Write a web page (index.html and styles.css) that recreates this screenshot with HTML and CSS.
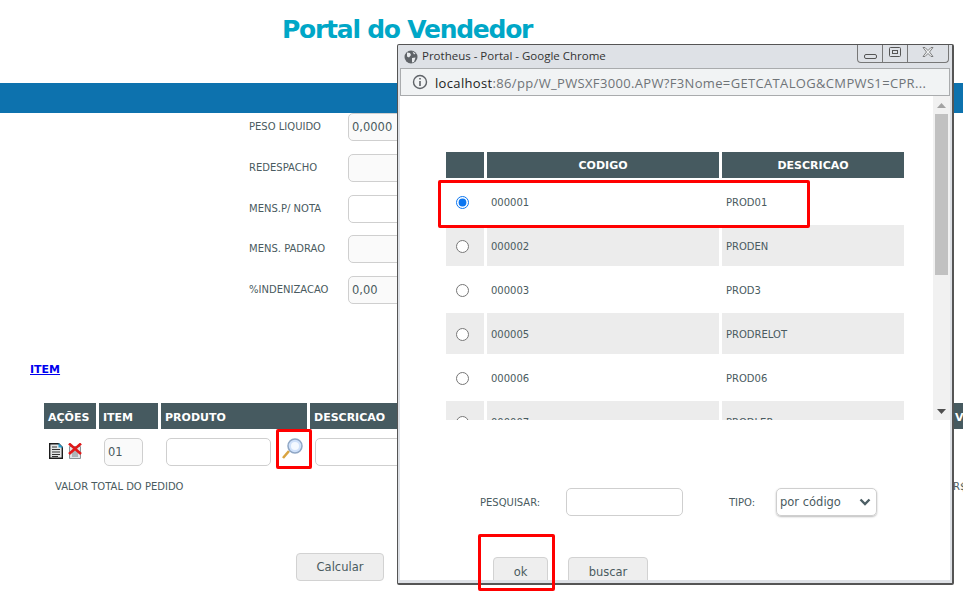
FILE: index.html
```html
<!DOCTYPE html>
<html lang="pt">
<head>
<meta charset="utf-8">
<title>Portal do Vendedor</title>
<link rel="stylesheet" href="styles.css">
</head>
<body>
<div class="page">
  <header class="head"><h1 class="title">Portal do Vendedor</h1></header>
  <div class="bar"></div>
  <form class="form">
    <div class="frow"><label class="lbl">PESO LIQUIDO</label><input class="inp ro wide" value="0,0000"></div>
    <div class="frow"><label class="lbl">REDESPACHO</label><input class="inp ro wide"></div>
    <div class="frow"><label class="lbl">MENS.P/ NOTA</label><input class="inp wide"></div>
    <div class="frow"><label class="lbl">MENS. PADRAO</label><input class="inp ro wide"></div>
    <div class="frow"><label class="lbl">%INDENIZACAO</label><input class="inp ro wide" value="0,00"></div>
  </form>
  <a class="itemlink" href="#">ITEM</a>
  <table class="grid">
    <colgroup><col class="c1"><col class="c2"><col class="c3"><col class="c4"><col class="c5"></colgroup>
    <thead><tr><th>AÇÕES</th><th>ITEM</th><th>PRODUTO</th><th>DESCRICAO</th><th class="vl">VL</th></tr></thead>
    <tbody><tr>
      <td class="acts">
        <svg class="ic" width="14" height="16" viewBox="0 0 14 16"><path d="M.7.7h9l3.600 3.600v11H.7z" fill="#e4e6e6" stroke="#1c1c1c" stroke-width="1.400"/><path d="M9.500 0L14 4.500H9.500z" fill="#2a9fd0"/><path d="M3 4h5M3 6.500h8M3 9h8M3 11.500h8M3 13.500h6" stroke="#333"/></svg>
        <svg class="ic" width="14" height="16" viewBox="0 0 14 16"><path d="M1.500 3.500h11v12h-11z" fill="#dfe3e6" stroke="#8a9296"/><path d="M4 9h6M4 11h6M4 13h6" stroke="#7d8588"/><path d="M1 .5l12 10.500M13 .5L1 11" stroke="#e01818" stroke-width="2.600"/></svg>
      </td>
      <td class="cell-it"><input class="inp ro itemno" value="01"></td>
      <td class="cell-pr"><input class="inp prod"><svg class="lens" width="22" height="24" viewBox="0 0 22 24"><path d="M2 20l6-7" stroke="#d9a441" stroke-width="2.600"/><circle cx="14" cy="8" r="7" fill="#cfe1fa" stroke="#8fa6c4" stroke-width="1.500"/><circle cx="14" cy="8" r="4" fill="#f4f9ff"/></svg></td>
      <td class="cell-de"><input class="inp desc"></td>
      <td></td>
    </tr></tbody>
  </table>
  <div class="total"><span>VALOR TOTAL DO PEDIDO</span><span class="rs">R$</span></div>
  <div class="calcrow"><button class="btn calc" type="button">Calcular</button></div>

  <section class="win">
    <div class="titlebar">
      <svg class="globe" width="14" height="14" viewBox="0 0 14 14"><circle cx="7" cy="7" r="6.500" fill="#5f6368"/><path d="M3 2.500l3 .5 1 2-2 2.500-2-1zM8 8l3.500-.5L10 12l-2 .5zM8.500 1.500l3 2-1.500 1z" fill="#e8eaed"/></svg>
      <span class="wtitle">Protheus - Portal - Google Chrome</span>
      <div class="ctrls">
        <span class="ctl c-min"><svg width="13" height="5" viewBox="0 0 13 5"><rect x=".5" y=".5" width="12" height="4" rx="1.500" fill="none" stroke="#555"/></svg></span>
        <span class="ctl c-max"><svg width="12" height="10" viewBox="0 0 12 10"><rect x=".5" y=".5" width="11" height="9" rx="1" fill="none" stroke="#555"/><rect x="3.500" y="3.500" width="5" height="3" fill="none" stroke="#555"/></svg></span>
        <span class="ctl c-x"><svg width="12" height="10" viewBox="0 0 12 10"><path d="M1 .5h2l3 3 3-3h2L7.500 5 11 9.500H9L6 6.500l-3 3H1L4.500 5z" fill="#eef0f2" stroke="#666" stroke-width=".8"/></svg></span>
      </div>
    </div>
    <div class="urlbar">
      <svg class="info" width="16" height="16" viewBox="0 0 16 16"><circle cx="8" cy="8" r="6.500" fill="none" stroke="#5f6368" stroke-width="1.400"/><path d="M8 7v5M8 4v1.600" stroke="#5f6368" stroke-width="1.600"/></svg>
      <span class="url"><b class="host">localhost</b>:86/pp/W_PWSXF3000.APW?F3Nome=GETCATALOG&amp;CMPWS1=CPR...</span>
    </div>
    <div class="content">
      <div class="scrollarea">
        <table class="list">
          <colgroup><col class="l1"><col class="l2"><col class="l3"></colgroup>
          <thead><tr><th></th><th>CODIGO</th><th>DESCRICAO</th></tr></thead>
          <tbody>
            <tr><td class="rc"><input type="radio" name="p" checked></td><td>000001</td><td>PROD01</td></tr>
            <tr><td class="rc"><input type="radio" name="p"></td><td>000002</td><td>PRODEN</td></tr>
            <tr><td class="rc"><input type="radio" name="p"></td><td>000003</td><td>PROD3</td></tr>
            <tr><td class="rc"><input type="radio" name="p"></td><td>000005</td><td>PRODRELOT</td></tr>
            <tr><td class="rc"><input type="radio" name="p"></td><td>000006</td><td>PROD06</td></tr>
            <tr><td class="rc"><input type="radio" name="p"></td><td>000007</td><td>PRODLER</td></tr>
          </tbody>
        </table>
        <div class="sbar">
          <svg class="arr" width="9" height="5" viewBox="0 0 9 5"><path d="M4.500 0L9 5H0z" fill="#a3a3a3"/></svg>
          <div class="thumb"></div>
          <svg class="arr down" width="9" height="5" viewBox="0 0 9 5"><path d="M0 0h9L4.500 5z" fill="#505050"/></svg>
        </div>
      </div>
      <div class="search">
        <label class="slbl">PESQUISAR:</label><input class="inp sinp">
        <label class="slbl tipo">TIPO:</label>
        <div class="sel"><span>por código</span><svg width="12" height="8" viewBox="0 0 12 8"><path d="M1.500 1.500L6 6l4.500-4.500" fill="none" stroke="#4d5f65" stroke-width="2.400"/></svg></div>
      </div>
      <div class="actions"><button class="btn ok" type="button">ok</button><button class="btn buscar" type="button">buscar</button></div>
    </div>
  </section>

  <div class="mark m-row"></div>
  <div class="mark m-lens"></div>
  <div class="mark m-ok"></div>
</div>
</body>
</html>
```
FILE: styles.css
```css
* { box-sizing: border-box; }
html, body { margin: 0; padding: 0; background: #fff; }
body { font-family: "DejaVu Sans", Verdana, sans-serif; font-size: 10px; color: #4a5b60; }
.page { position: relative; width: 963px; height: 605px; overflow: hidden; }
.head { height: 83px; padding: 15px 0 0 282px; }
.title { margin: 0; font-size: 25px; line-height: 30px; font-weight: 700; letter-spacing: -1.25px; color: #00a7c7; white-space: nowrap; }
.bar { height: 30px; background: #0d72ae; }

.form { display: flex; flex-direction: column; gap: 12.75px; padding-left: 249px; }
.frow { display: flex; align-items: center; height: 28px; }
.lbl { width: 99px; white-space: nowrap; padding-bottom: 1px; }
.inp { height: 28px; border: 1px solid #cfcfcf; border-radius: 5px; background: #fff; padding: 0 3px; font: 11.500px "DejaVu Sans", Verdana, sans-serif; color: #4a5b60; outline: 0; margin: 0; }
.ro { background: #fafafa; }
.wide { width: 200px; }

.itemlink { display: block; margin: 58px 0 0 30px; font: 700 11px/16px "DejaVu Sans", Verdana, sans-serif; color: #0000ee; width: 31px; }

.grid { table-layout: fixed; width: 1000px; margin: 25px 0 0 41px; border-collapse: separate; border-spacing: 3px 0; }
.c1 { width: 52px; } .c2 { width: 59px; } .c3 { width: 146px; } .c4 { width: 640px; } .c5 { width: 91px; }
.grid th { background: #465a60; color: #fff; height: 26px; padding: 2px 5px 0 4px; text-align: left; font: 700 11px "DejaVu Sans", Verdana, sans-serif; white-space: nowrap; overflow: hidden; }
.grid .vl { padding-left: 2px; }
.grid td { height: 36px; padding: 9px 0 0; vertical-align: top; }
.acts { white-space: nowrap; padding-left: 5px !important; font-size: 0; }
.acts .ic { margin-right: 5px; vertical-align: top; margin-top: 5px; }
.cell-it { padding-left: 5px !important; }
.itemno { width: 39px; }
.cell-pr { white-space: nowrap; padding-left: 5px !important; }
.prod { width: 105px; }
.lens { vertical-align: top; margin-left: 10px; }
.cell-de { padding-left: 5px !important; }
.desc { width: 300px; }

.total { display: flex; justify-content: space-between; width: 963px; padding: 14px 0 0 55px; line-height: 13px; }
.rs { width: 10px; white-space: nowrap; }
.calcrow { padding: 60px 0 0 296px; }
.btn { height: 28px; border: 1px solid #d2d2d2; border-radius: 4px; background: #eee; font: 11.500px "DejaVu Sans", Verdana, sans-serif; color: #4a5b60; padding: 0; }
.calc { width: 88px; }

.win { position: absolute; left: 397px; top: 44px; width: 557px; height: 541px; border: 1px solid #555; border-width: 1px 2px 2px 1px; border-radius: 2px; background: #dee1e6; padding: 0 2px 3px 2px; display: flex; flex-direction: column; }
.titlebar { height: 23px; display: flex; align-items: center; position: relative; padding-left: 4px; }
.wtitle { margin-left: 4px; padding-bottom: 2px; font: 11.500px "Open Sans", sans-serif; color: #333; }
.globe { flex: none; }
.ctrls { position: absolute; right: 1px; top: 0; height: 18px; display: flex; border: 1px solid #777; border-top: 0; border-radius: 0 0 4px 4px; }
.ctl { display: flex; align-items: center; justify-content: center; border-left: 1px solid #777; }
.c-min { width: 24px; border-left: 0; padding-top: 6px; }
.c-max { width: 25px; padding-bottom: 3px; }
.c-x { width: 41px; padding-bottom: 3px; }
.urlbar { height: 28px; flex: none; display: flex; align-items: center; padding-left: 11px; background: #f1f3f4; border: 1px solid #a9abad; }
.url { margin-left: 7px; padding-top: 1px; font: 13px "Open Sans", sans-serif; color: #6f7478; white-space: nowrap; letter-spacing: .34px; }
.host { font-weight: 400; color: #222; }
.content { flex: 1; min-height: 0; background: #fff; overflow: hidden; }
.scrollarea { height: 324px; position: relative; overflow: hidden; padding: 53px 0 0 43px; }
.list { table-layout: fixed; width: 464px; border-collapse: separate; border-spacing: 3px; }
.l1 { width: 38px; } .l2 { width: 232px; } .l3 { width: 182px; }
.list th { background: #465a60; color: #fff; height: 26px; font: 700 11px "DejaVu Sans", Verdana, sans-serif; padding: 0; }
.list td { height: 41px; padding: 2px 0 0 4px; font-size: 10px; }
.list tbody tr:nth-child(even) td { background: #ececec; }
.list .rc { padding: 2px 0 0 10px; text-align: left; }
.rc input { margin: 0; vertical-align: middle; accent-color: #0a75f0; }
.sbar { position: absolute; right: 0; top: 0; bottom: 0; width: 17px; background: #f1f1f1; display: flex; flex-direction: column; align-items: center; }
.arr { flex: none; margin-top: 7px; }
.thumb { width: 13px; height: 161px; margin-top: 6px; background: #c1c1c1; flex: none; }
.arr.down { margin-top: auto; margin-bottom: 6px; }
.search { display: flex; align-items: center; height: 28px; margin-top: 68px; padding-left: 80px; }
.slbl { width: 86px; white-space: nowrap; }
.sinp { width: 117px; }
.tipo { width: 47px; margin-left: 46px; }
.sel { width: 101px; height: 28px; border: 1px solid #cfcfcf; border-radius: 5px; box-shadow: 0 1px 2px #bbb; display: flex; align-items: center; justify-content: space-between; padding: 0 5px 0 3px; font-size: 11.500px; }
.actions { display: flex; gap: 20px; margin-top: 41px; padding-left: 93px; }
.ok { width: 55px; height: 30px; }
.buscar { width: 80px; height: 30px; }

.mark { position: absolute; border: 3px solid #f00; border-radius: 2px; pointer-events: none; }
.m-row { left: 438px; top: 180px; width: 372px; height: 48px; }
.m-lens { left: 276px; top: 429px; width: 36px; height: 40px; }
.m-ok { left: 478px; top: 534px; width: 77px; height: 57px; }
```
